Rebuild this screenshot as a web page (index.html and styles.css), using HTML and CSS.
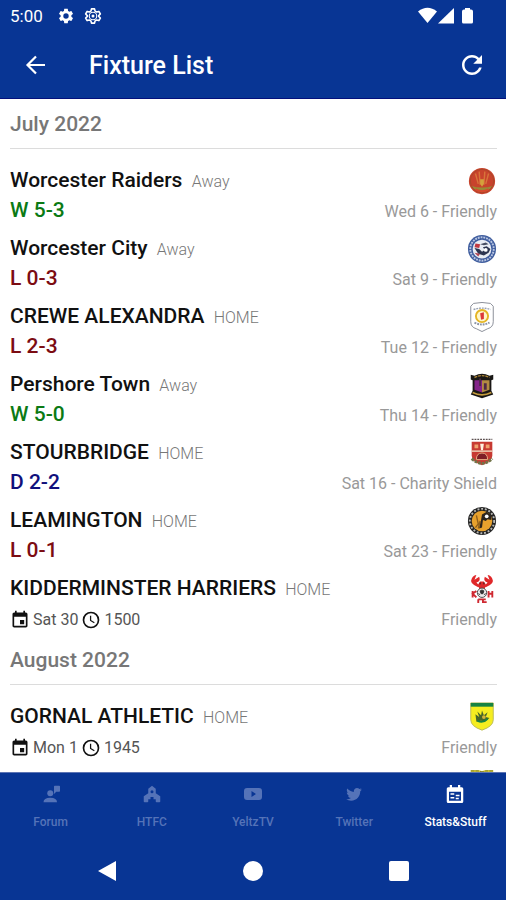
FILE: index.html
```html
<!DOCTYPE html>
<html lang="en">
<head>
    <meta charset="UTF-8">
    <meta name="viewport" content="width=device-width, initial-scale=1.0">
    <title>Fixture List</title>
    <link rel="stylesheet" href="styles.css">
</head>
<body>
    <!-- shared icons -->
    <svg class="sprite" width="0" height="0" aria-hidden="true">
        <symbol id="event" viewBox="0 0 24 24">
            <path d="M17 12h-5v5h5v-5zM16 1v2H8V1H6v2H5c-1.1 0-2 .9-2 2v14c0 1.1.9 2 2 2h14c1.1 0 2-.9 2-2V5c0-1.1-.9-2-2-2h-1V1h-2zm3 18H5V8h14v11z"/>
        </symbol>
        <symbol id="clock" viewBox="0 0 24 24">
            <circle cx="12" cy="12" r="9" fill="none" stroke="currentColor" stroke-width="2"/>
            <path d="M11.500 7v5.500l4.500 2.700" fill="none" stroke="currentColor" stroke-width="1.500"/>
        </symbol>
    </svg>

    <header class="top">
        <div class="status-bar">
            <span class="time">5:00</span>
            <svg class="status-icon" viewBox="0 0 24 24">
                <path fill-rule="evenodd" d="M19.14 12.94c.04-.3.06-.61.06-.94 0-.32-.02-.64-.07-.94l2.03-1.58c.18-.14.23-.41.12-.61l-1.92-3.32c-.12-.22-.37-.29-.59-.22l-2.39.96c-.5-.38-1.03-.7-1.62-.94l-.36-2.54c-.04-.24-.24-.41-.48-.41h-3.84c-.24 0-.43.17-.47.41l-.36 2.54c-.59.24-1.13.57-1.62.94l-2.39-.96c-.22-.08-.47 0-.59.22L2.74 8.87c-.12.21-.08.47.12.61l2.03 1.58c-.05.3-.09.63-.09.94s.02.64.07.94l-2.03 1.58c-.18.14-.23.41-.12.61l1.92 3.32c.12.22.37.29.59.22l2.39-.96c.5.38 1.03.7 1.62.94l.36 2.54c.05.24.24.41.48.41h3.84c.24 0 .44-.17.47-.41l.36-2.54c.59-.24 1.13-.56 1.62-.94l2.39.96c.22.08.47 0 .59-.22l1.92-3.32c.12-.22.07-.47-.12-.61l-2.01-1.58zM12 15.6a3.6 3.6 0 1 1 0-7.200 3.6 3.6 0 0 1 0 7.200z"/>
            </svg>
            <svg class="status-icon" viewBox="0 0 24 24">
                <path fill="none" stroke="currentColor" stroke-width="2.200" stroke-linejoin="round" d="M10 2.500h4l.8 3 2 1.200 3-.8 2 3.400-2.200 2.200v1l2.200 2.200-2 3.400-3-.8-2 1.200-.8 3h-4l-.8-3-2-1.200-3 .8-2-3.400 2.200-2.200v-1L2.200 9.300l2-3.400 3 .8 2-1.200z"/>
                <circle cx="12" cy="12" r="5" fill="none" stroke="currentColor" stroke-width="1.500"/>
                <circle cx="12" cy="12" r="2"/>
            </svg>
            <svg class="signals" viewBox="0 0 56 18">
                <path d="M0 4.500Q9.500-3 19 4.500L9.500 16z"/>
                <path d="M36 1v15.500H20z"/>
                <path d="M47 1h5v1.500h1a2 2 0 0 1 2 2V15a1.500 1.500 0 0 1-1.500 1.500h-8A1.500 1.500 0 0 1 44 15V4.500a2 2 0 0 1 2-2h1z"/>
            </svg>
        </div>
        <div class="app-bar">
            <button class="icon-button" type="button" aria-label="Back">
                <svg viewBox="0 0 24 24"><path d="M21 12H4M12 3.500L3.500 12l8.500 8.500" fill="none" stroke="currentColor" stroke-width="2.200"/></svg>
            </button>
            <h1>Fixture List</h1>
            <button class="icon-button" type="button" aria-label="Refresh">
                <svg class="refresh" viewBox="0 0 24 24"><path d="M17.65 6.35C16.2 4.9 14.21 4 12 4c-4.42 0-7.99 3.58-7.99 8s3.57 8 7.99 8c3.73 0 6.84-2.55 7.73-6h-2.08c-.82 2.33-3.04 4-5.65 4-3.31 0-6-2.69-6-6s2.69-6 6-6c1.66 0 3.14.69 4.22 1.78L13 11h7V4l-2.35 2.35z"/></svg>
            </button>
        </div>
    </header>

    <main>
        <section>
            <h2>July 2022</h2>
            <ul class="fixtures">
                <li>
                    <h3>Worcester Raiders <small>Away</small></h3>
                    <svg class="crest" viewBox="0 0 32 32">
                        <circle cx="16" cy="16" r="14" fill="#c8432c"/>
                        <path d="M4 21q12 4 24 0a14 14 0 0 1-24 0z" fill="#9a8a35"/>
                        <path d="M9 8l3 11M13 6l1 14M23 8l-3 11M19 6l-1 14" stroke="#d8743a" stroke-width="1.500"/>
                        <circle cx="16" cy="16" r="12.500" fill="none" stroke="#a8482a"/>
                        <path d="M14 14h4v5l-2 3-2-3z" fill="#d4a23c"/>
                        <path d="M9 25q7 4 14 0" stroke="#d8482e" stroke-width="2" fill="none"/>
                    </svg>
                    <p class="result win">W 5-3</p>
                    <p class="info">Wed 6 - Friendly</p>
                </li>
                <li>
                    <h3>Worcester City <small>Away</small></h3>
                    <svg class="crest" viewBox="0 0 32 32">
                        <circle cx="16" cy="16" r="15" fill="#3f5d9e"/>
                        <circle cx="16" cy="16" r="12.500" fill="none" stroke="#b9c6e2" stroke-width="2" stroke-dasharray="2 1"/>
                        <circle cx="16" cy="16" r="10" fill="#e9edf4"/>
                        <path d="M8 15l5 1 3 3 3-2-2-3 4-1 4 3-2 4-5 3-6-2z" fill="#2c3550"/>
                        <path d="M9 10l5 1-1 4-5-1z" fill="#c23a42"/>
                        <path d="M14 11l6-2 3 2-5 1z" fill="#454c60"/>
                        <circle cx="20" cy="17" r="2" fill="#fff"/>
                        <path d="M8 20l6 1-2 3z" fill="#b04450"/>
                    </svg>
                    <p class="result loss">L 0-3</p>
                    <p class="info">Sat 9 - Friendly</p>
                </li>
                <li>
                    <h3>CREWE ALEXANDRA <small>HOME</small></h3>
                    <svg class="crest" viewBox="0 0 32 32">
                        <path d="M7 1.500q9-2 18 0l3 3V21q0 6-6 7.500L16 31.500l-6-3Q4 27 4 21V4.500z" fill="#fff" stroke="#858a94"/>
                        <path d="M7 8q9-3 18 0" stroke="#98a0b0" stroke-width="1.500" stroke-dasharray="2 1" fill="none"/>
                        <circle cx="16" cy="15" r="6.500" fill="#fff6c8" stroke="#e5b524" stroke-width="2"/>
                        <path d="M14 12l4-1v7l-3 1z" fill="#dc3838"/>
                        <path d="M8 22q8 4 16 0" stroke="#8b94a6" stroke-width="2" stroke-dasharray="2 1" fill="none"/>
                    </svg>
                    <p class="result loss">L 2-3</p>
                    <p class="info">Tue 12 - Friendly</p>
                </li>
                <li>
                    <h3>Pershore Town <small>Away</small></h3>
                    <svg class="crest" viewBox="0 0 32 32">
                        <path d="M4 5l4 1q8-4 16 0l4-1v5l-2 1v11l2 4-12 4-12-4 2-4V11l-2-1z" fill="#191715"/>
                        <path d="M8 8q8-4 16 0" stroke="#ae8637" stroke-width="1.500" stroke-dasharray="3 1" fill="none"/>
                        <path d="M8 11h8v13l-8-3z" fill="#842489"/>
                        <path d="M16 11h8v10l-8 3z" fill="#b38a42"/>
                        <path d="M13 9h2v8h-2zM18 14h3v7h-3z" fill="#4d2a45"/>
                        <path d="M6 24q10 5 20 0" stroke="#c49b3d" stroke-width="2" fill="none"/>
                    </svg>
                    <p class="result win">W 5-0</p>
                    <p class="info">Thu 14 - Friendly</p>
                </li>
                <li>
                    <h3>STOURBRIDGE <small>HOME</small></h3>
                    <svg class="crest" viewBox="0 0 32 32">
                        <path d="M5 1.500h22" stroke="#5d5050" stroke-width="1.500" stroke-dasharray="2 1"/>
                        <path d="M5 4h22v15q0 6-11 10-11-4-11-10z" fill="#c73a32"/>
                        <path d="M5 14h22" stroke="#f0d9bd" stroke-width="1.500"/>
                        <path d="M8 7h4v4H8zM20 7h4v4h-4z" fill="#efa26d"/>
                        <path d="M14 6h4l-1 7h-2z" fill="#fff1df"/>
                        <path d="M10 23q0-7 6-7t6 7z" fill="#7d1e26" stroke="#e7b184"/>
                        <path d="M5 22q11 10 22 0" fill="none" stroke="#717448" stroke-width="3" stroke-dasharray="3 1"/>
                    </svg>
                    <p class="result draw">D 2-2</p>
                    <p class="info">Sat 16 - Charity Shield</p>
                </li>
                <li>
                    <h3>LEAMINGTON <small>HOME</small></h3>
                    <svg class="crest" viewBox="0 0 32 32">
                        <circle cx="16" cy="16" r="15" fill="#242424"/>
                        <circle cx="16" cy="16" r="13" fill="none" stroke="#b9b9b5" stroke-width="2" stroke-dasharray="2 2"/>
                        <circle cx="16" cy="16" r="11" fill="#e7a12d"/>
                        <path d="M10 10l2 9-3 4M14 16l-2 8" stroke="#90601c" stroke-width="1.500" fill="none"/>
                        <path d="M16 9l5-3 5 4v5l-4-1-2 2-3-1-1 8-3 1 2-9z" fill="#2c241c"/>
                        <circle cx="21" cy="11" r="2" fill="#fff"/>
                    </svg>
                    <p class="result loss">L 0-1</p>
                    <p class="info">Sat 23 - Friendly</p>
                </li>
                <li>
                    <h3>KIDDERMINSTER HARRIERS <small>HOME</small></h3>
                    <svg class="crest" viewBox="0 0 32 32">
                        <path d="M12 14Q2 10 5 5q2-4 5-4L8 6l5-3q2 5-3 6l4 4M20 14q10-4 7-9-2-4-5-4l2 5-5-3q-2 5 3 6l-4 4" fill="#e0282a"/>
                        <path d="M12 11l2-3h4l2 3-1 5h-6z" fill="#dd292b"/>
                        <path d="M14 9v2M18 9v2" stroke="#222"/>
                        <path d="M6 18v7M10 18l-4 3 4 4M23 18v7M27 18v7M23 21h4M12 27v4M12 27h4M20 27h-3v3h4" stroke="#cf2931" stroke-width="2" fill="none"/>
                        <circle cx="16" cy="20" r="5" fill="#eee" stroke="#444"/>
                        <path d="M14 18l2-1 2 1-1 3h-2zM12 21l2 1M18 22l2-1" fill="#333" stroke="#333"/>
                    </svg>
                    <p class="kickoff">
                        <svg><use href="#event"/></svg>Sat 30
                        <svg><use href="#clock"/></svg>1500
                    </p>
                    <p class="info">Friendly</p>
                </li>
            </ul>
        </section>
        <section>
            <h2>August 2022</h2>
            <ul class="fixtures">
                <li>
                    <h3>GORNAL ATHLETIC <small>HOME</small></h3>
                    <svg class="crest" viewBox="0 0 32 32">
                        <path d="M4 1h24v18q0 7-12 11Q4 26 4 19z" fill="#f5ed20" stroke="#b9b955"/>
                        <path d="M4 1h24v4H4z" fill="#168342"/>
                        <path d="M9 13l4 3-2-6 4 4 1-5 2 5 4-3-2 5 4 1-5 4-4-1-5 1z" fill="#46652a"/>
                        <path d="M11 20q6 3 11-2" stroke="#168342" stroke-width="2" fill="none"/>
                        <circle cx="18" cy="16" r="2" fill="#d3b338"/>
                    </svg>
                    <p class="kickoff">
                        <svg><use href="#event"/></svg>Mon 1
                        <svg><use href="#clock"/></svg>1945
                    </p>
                    <p class="info">Friendly</p>
                </li>
                <li>
                    <h3></h3>
                    <svg class="crest" viewBox="0 0 32 32">
                        <path d="M4 0h8l4 1 4-1h8v20q0 7-12 10Q4 27 4 20z" fill="#d9d13c"/>
                        <path d="M4 1h8l4 1 4-1h8" stroke="#77752e" stroke-dasharray="4 1" fill="none"/>
                    </svg>
                </li>
            </ul>
        </section>
    </main>

    <footer>
        <nav class="tabs">
            <a href="#forum">
                <svg viewBox="0 0 24 24">
                    <circle cx="11" cy="11" r="4"/>
                    <path d="M2 23q0-6 9-6t9 6z"/>
                    <path d="M17 1h6q1 0 1 1v6q0 1-1 1h-4l-3 3V2q0-1 1-1z"/>
                </svg>
                Forum
            </a>
            <a href="#htfc">
                <svg viewBox="0 0 24 24">
                    <path fill-rule="evenodd" d="M12 1l5 4v6l6 4v7q0 1-1 1h-4q-1 0-1-1v-3h-3v-3h-4v3H7v3q0 1-1 1H2q-1 0-1-1v-7l6-4V5zM12 7a2 2 0 1 0 0 4 2 2 0 0 0 0-4z"/>
                </svg>
                HTFC
            </a>
            <a href="#yeltztv">
                <svg viewBox="0 0 24 24">
                    <path fill-rule="evenodd" d="M4 4h16q4 0 4 4v8q0 4-4 4H4q-4 0-4-4V8q0-4 4-4zM10 8v8l6-4z"/>
                </svg>
                YeltzTV
            </a>
            <a href="#twitter">
                <svg viewBox="0 0 24 24">
                    <path d="M22.46 6c-.77.35-1.6.58-2.46.69.88-.53 1.56-1.37 1.88-2.38-.83.5-1.75.85-2.72 1.05C18.37 4.5 17.26 4 16 4c-2.35 0-4.27 1.92-4.27 4.29 0 .34.04.67.11.98C8.280 9.090 5.110 7.380 3 4.790c-.37.63-.58 1.370-.58 2.150 0 1.490.75 2.810 1.910 3.560-.71 0-1.370-.2-1.950-.5v.03c0 2.080 1.480 3.820 3.440 4.210a4.220 4.220 0 0 1-1.930.07 4.280 4.280 0 0 0 4 2.980 8.521 8.521 0 0 1-6.350 1.780C3.440 20.290 5.700 21 8.120 21 16 21 20.330 14.460 20.330 8.790c0-.19 0-.37-.01-.56.84-.6 1.560-1.360 2.140-2.230z"/>
                </svg>
                Twitter
            </a>
            <a class="active" href="#stats" aria-current="page">
                <svg viewBox="0 0 24 24">
                    <path fill-rule="evenodd" d="M5 0h3v3h8V0h3v3h2q2 0 2 2v17q0 2-2 2H3q-2 0-2-2V5q0-2 2-2h2zM4 9v12h16V9z"/>
                    <path d="M6 11h5v2H6zM13 13h5v2h-5zM6 16h5v2H6zM13 17h4v2h-4z"/>
                </svg>
                Stats&amp;Stuff
            </a>
        </nav>
        <div class="system-nav">
            <button type="button" aria-label="System back"><svg viewBox="0 0 22 22"><path d="M20 1v20L2 11z"/></svg></button>
            <button type="button" aria-label="Home"><svg viewBox="0 0 22 22"><circle cx="11" cy="11" r="10"/></svg></button>
            <button type="button" aria-label="Recent apps"><svg viewBox="0 0 22 22"><rect x="1" y="1" width="20" height="20" rx="2"/></svg></button>
        </div>
    </footer>
</body>
</html>
```

FILE: styles.css
```css
* {
    box-sizing: border-box;
}

body {
    margin: 0;
    height: 100vh;
    display: flex;
    flex-direction: column;
    font-family: Roboto, sans-serif;
    background: #fff;
    color: #111;
}

h1, h2, h3, p, ul {
    margin: 0;
    padding: 0;
}

svg {
    display: block;
    fill: currentColor;
}

.sprite {
    position: absolute;
}

button {
    padding: 0;
    border: 0;
    background: none;
    color: inherit;
}

.top {
    background: #083594;
    color: #fff;
    border-bottom: 1px solid #04107c;
}

.status-bar {
    display: flex;
    align-items: center;
    height: 32px;
    padding: 0 32px 0 10px;
    font-size: 17px;
}

.time {
    margin-right: 14px;
}

.status-icon {
    width: 18px;
    height: 18px;
    margin-right: 9px;
}

.signals {
    width: 56px;
    height: 18px;
    margin-left: auto;
}

.app-bar {
    display: flex;
    align-items: center;
    height: 66px;
    padding: 0 18px 0 20px;
}

.app-bar h1 {
    flex: 1;
    margin-left: 37px;
    font-size: 25px;
    font-weight: 500;
}

.icon-button {
    display: grid;
    place-items: center;
    width: 32px;
    height: 48px;
}

.icon-button svg {
    width: 24px;
    height: 24px;
}

.icon-button .refresh {
    width: 30px;
    height: 30px;
}

main {
    flex: 1;
    min-height: 0;
    padding: 7px 9px 0 10px;
    overflow-y: auto;
    scrollbar-width: none;
}

h2 {
    padding-bottom: 6px;
    border-bottom: 1px solid #dcdcdc;
    font-size: 21px;
    line-height: 36px;
    font-weight: 500;
    color: #777;
}

.fixtures {
    padding-top: 17px;
    list-style: none;
}

.fixtures li {
    display: grid;
    grid-template-columns: 1fr auto;
    grid-template-rows: 31px 26px;
    align-items: end;
    padding-bottom: 11px;
}

h3 {
    font-size: 21px;
    line-height: 31px;
    font-weight: 500;
}

h3 small {
    margin-left: 4px;
    font-size: 16px;
    font-weight: 300;
    color: #777;
}

.crest {
    align-self: start;
    justify-self: end;
    width: 30px;
    height: 30px;
}

.result {
    font-size: 21px;
    line-height: 26px;
    font-weight: 500;
}

.win {
    color: #0b7a14;
}

.loss {
    color: #7c0c12;
}

.draw {
    color: #10107c;
}

.info,
.kickoff {
    font-size: 16px;
    line-height: 22px;
}

.info {
    color: #999;
}

.kickoff {
    display: flex;
    align-items: center;
    gap: 3px;
    color: #555;
}

.kickoff svg {
    width: 20px;
    height: 20px;
    color: #111;
}

footer {
    background: #083594;
    color: #fff;
    border-top: 1px solid #5c74b4;
}

.tabs {
    display: grid;
    grid-template-columns: repeat(5, 1fr);
    height: 69px;
    padding-top: 12px;
}

.tabs a {
    display: flex;
    flex-direction: column;
    align-items: center;
    gap: 10px;
    font-size: 12px;
    line-height: 18px;
    font-weight: 500;
    color: #5573b8;
    text-decoration: none;
}

.tabs svg {
    width: 18px;
    height: 18px;
}

.tabs .active {
    color: #fff;
}

.system-nav {
    display: flex;
    justify-content: center;
    height: 58px;
}

.system-nav button {
    display: grid;
    place-items: center;
    width: 146px;
}

.system-nav svg {
    width: 22px;
    height: 22px;
}
```
